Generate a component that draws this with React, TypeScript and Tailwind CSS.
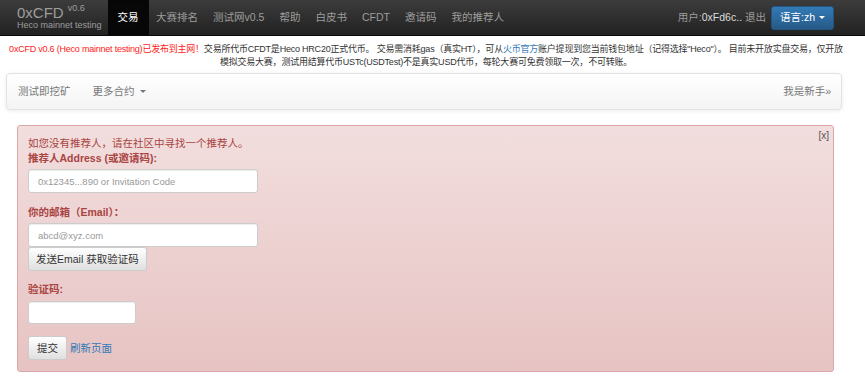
import { useState } from "react";

const navItems = ["交易", "大赛排名", "测试网v0.5", "帮助", "白皮书", "CFDT", "邀请码", "我的推荐人"];

const Caret = ({ className }: { className?: string }) => (
    <span className={`inline-block w-0 h-0 border-x-[3px] border-x-transparent border-t-[3px] align-middle ${className ?? ""}`} />
);

const App = () => {
    const [showAlert, setShowAlert] = useState(true);

    return (
        <div className="min-h-screen bg-white font-['Liberation_Sans','Noto_Sans_CJK_SC',sans-serif] text-[#333]">
            {/* top navbar */}
            <div className="h-[36px] flex items-stretch bg-gradient-to-b from-[#3c3c3c] to-[#222] border-b border-[#080808]">
                <div className="pl-[17px] pr-[6px] flex flex-col justify-center text-[#9d9d9d] leading-none">
                    <div className="flex items-start">
                        <span className="text-[15px]">0xCFD</span>
                        <span className="text-[9px] ml-[4px] -mt-[1px]">v0.6</span>
                    </div>
                    <span className="text-[9px] mt-[1px]">Heco mainnet testing</span>
                </div>
                <ul className="flex items-stretch text-[10.5px]">
                    {navItems.map((item, i) => (
                        <li
                            key={item}
                            className={
                                i === 0
                                    ? "flex items-center px-[10px] bg-[#080808] text-white shadow-[inset_0_3px_9px_rgba(0,0,0,0.25)]"
                                    : "flex items-center px-[7.5px] text-[#9d9d9d]"
                            }
                        >
                            {item}
                        </li>
                    ))}
                </ul>
                <div className="ml-auto flex items-center pr-[31px]">
                    <span className="text-[10.5px] text-[#9d9d9d] mr-[5px]">
                        用户:<span className="text-[#ddd]">0xFd6c..</span> 退出
                    </span>
                    <button className="h-[24px] px-[8px] rounded-[3px] border border-[#245580] bg-gradient-to-b from-[#337ab7] to-[#265a88] text-white text-[10.5px] flex items-center gap-[4px]">
                        语言:zh <Caret className="border-t-white" />
                    </button>
                </div>
            </div>

            {/* notice */}
            <p className="mt-[7px] pl-[6px] pr-[19px] text-center text-[9px] leading-[13px] tracking-[-0.22px] whitespace-nowrap">
                <span className="text-[#ff2222]">0xCFD v0.6 (Heco mainnet testing)已发布到主网！</span>
                交易所代币CFDT是Heco HRC20正式代币。 交易需消耗gas（真实HT），可从<span className="text-[#337ab7]">火币官方</span>账户提现到您当前钱包地址（记得选择"Heco"）。 目前未开放实盘交易，仅开放
                <br />
                模拟交易大赛，测试用结算代币USTc(USDTest)不是真实USD代币，每轮大赛可免费领取一次，不可转账。
            </p>

            {/* secondary navbar */}
            <div className="mt-[4px] ml-[6px] mr-[23px] h-[37px] flex items-center rounded-[4px] border border-[#e3e3e3] bg-gradient-to-b from-white to-[#f4f4f4] shadow-[0_1px_4px_rgba(0,0,0,0.08)] text-[10.5px] text-[#777]">
                <span className="pl-[11px]">测试即挖矿</span>
                <span className="ml-[22px] flex items-center gap-[5px]">
                    更多合约 <Caret className="border-t-[#777]" />
                </span>
                <span className="ml-auto pr-[10px]">我是新手»</span>
            </div>

            {/* alert */}
            {showAlert && (
                <div className="relative mt-[15px] ml-[17px] mr-[31px] rounded-[3px] border border-[#dca7a7] bg-gradient-to-b from-[#f2dede] to-[#e7c3c3] px-[10px] pt-[10px] pb-[11px] text-[#a94442] text-[10.5px] leading-[15px]">
                    <button
                        onClick={() => setShowAlert(false)}
                        className="absolute right-[4px] top-[2px] text-[10px] text-[#555]"
                    >
                        [x]
                    </button>
                    <div>如您没有推荐人，请在社区中寻找一个推荐人。</div>
                    <div className="font-bold">推荐人Address (或邀请码):</div>
                    <input
                        placeholder="0x12345...890 or Invitation Code"
                        className="mt-[3px] block w-[230px] h-[24px] px-[9px] rounded-[3px] border border-[#ccc] bg-white text-[9.5px] text-[#555] placeholder:text-[#999] shadow-[inset_0_1px_1px_rgba(0,0,0,0.075)] outline-none"
                    />
                    <div className="mt-[12px] font-bold">你的邮箱（Email）：</div>
                    <input
                        placeholder="abcd@xyz.com"
                        className="mt-[3px] block w-[230px] h-[24px] px-[9px] rounded-[3px] border border-[#ccc] bg-white text-[9.5px] text-[#555] placeholder:text-[#999] shadow-[inset_0_1px_1px_rgba(0,0,0,0.075)] outline-none"
                    />
                    <button className="block h-[24px] px-[7px] rounded-[3px] border border-[#ccc] bg-gradient-to-b from-white to-[#e0e0e0] text-[#333] text-[10.5px]">
                        发送Email 获取验证码
                    </button>
                    <div className="mt-[11px] font-bold">验证码:</div>
                    <input className="mt-[4px] block w-[108px] h-[23px] px-[9px] rounded-[3px] border border-[#ccc] bg-white text-[9.5px] shadow-[inset_0_1px_1px_rgba(0,0,0,0.075)] outline-none" />
                    <div className="mt-[12px] flex items-center gap-[3px]">
                        <button className="h-[24px] px-[8px] rounded-[3px] border border-[#ccc] bg-gradient-to-b from-white to-[#e0e0e0] text-[#333] text-[10.5px]">
                            提交
                        </button>
                        <a href="#" className="text-[#337ab7]">刷新页面</a>
                    </div>
                </div>
            )}
        </div>
    );
};

export default App;
